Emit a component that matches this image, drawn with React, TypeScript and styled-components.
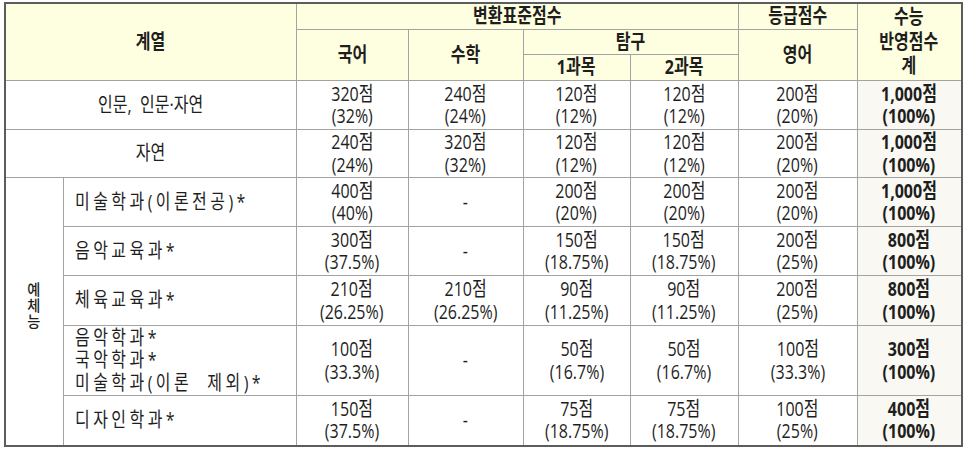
import React from "react";
import styled, { createGlobalStyle } from "styled-components";

const GlobalStyle = createGlobalStyle`
  html, body {
    margin: 0;
    background: #ffffff;
  }
  body {
    font-family: "Open Sans", "Noto Sans CJK KR", sans-serif;
    color: #1e1e1e;
  }
`;

const HEADER_BG = "#fefee0";
const TOTAL_BG = "#f9f8f3";
const LINE = "#a3a3a3";

const Table = styled.table`
  border-collapse: collapse;
  table-layout: fixed;
  width: 957px;
  margin: 2px 0 0 4px;
  border: 2px solid #5c5c5c;
  font-size: 20px;
`;

const Row = styled.tr<{ $h: number }>`
  height: ${({ $h }) => $h}px;
`;

const HeadCell = styled.th`
  background: ${HEADER_BG};
  border: 1px solid ${LINE};
  padding: 0;
  font-weight: 700;
  line-height: 24.5px;
  text-align: center;
  vertical-align: middle;
`;

const Cell = styled.td<{ $total?: boolean }>`
  background: ${({ $total }) => ($total ? TOTAL_BG : "#ffffff")};
  border: 1px solid ${LINE};
  padding: 0;
  font-weight: ${({ $total }) => ($total ? 700 : 400)};
  line-height: 22.5px;
  text-align: center;
  vertical-align: middle;
`;

const NameCell = styled.td`
  border: 1px solid ${LINE};
  padding: 0 0 0 11px;
  line-height: 22.5px;
  text-align: left;
  vertical-align: middle;
  letter-spacing: 4.3px;
`;

const GroupCell = styled.td`
  border: 1px solid ${LINE};
  padding: 0 0 8px;
  text-align: center;
  vertical-align: middle;
`;

const GroupLabel = styled.span`
  display: inline-block;
  font-size: 15px;
  font-weight: 500;
  line-height: 16px;
  color: #1e1e1e;
  transform: scaleX(0.95);
`;

const Squeeze = styled.span<{ $left?: boolean }>`
  display: inline-block;
  white-space: nowrap;
  transform: scaleX(0.8);
  transform-origin: ${({ $left }) => ($left ? "left center" : "center")};
`;

const widths = [58, 233, 112, 115, 107, 108, 119, 105];

type Score = [string, string] | null;

interface Line {
  name: string[];
  cols: Score[];
  total: [string, string];
  h: number;
}

const general: Line[] = [
  {
    name: ["인문,\u00a0 인문·자연"],
    cols: [["320점", "(32%)"], ["240점", "(24%)"], ["120점", "(12%)"], ["120점", "(12%)"], ["200점", "(20%)"]],
    total: ["1,000점", "(100%)"],
    h: 49,
  },
  {
    name: ["자연"],
    cols: [["240점", "(24%)"], ["320점", "(32%)"], ["120점", "(12%)"], ["120점", "(12%)"], ["200점", "(20%)"]],
    total: ["1,000점", "(100%)"],
    h: 48,
  },
];

const arts: Line[] = [
  {
    name: ["미술학과(이론전공)*"],
    cols: [["400점", "(40%)"], null, ["200점", "(20%)"], ["200점", "(20%)"], ["200점", "(20%)"]],
    total: ["1,000점", "(100%)"],
    h: 49,
  },
  {
    name: ["음악교육과*"],
    cols: [["300점", "(37.5%)"], null, ["150점", "(18.75%)"], ["150점", "(18.75%)"], ["200점", "(25%)"]],
    total: ["800점", "(100%)"],
    h: 49,
  },
  {
    name: ["체육교육과*"],
    cols: [["210점", "(26.25%)"], ["210점", "(26.25%)"], ["90점", "(11.25%)"], ["90점", "(11.25%)"], ["200점", "(25%)"]],
    total: ["800점", "(100%)"],
    h: 50,
  },
  {
    name: ["음악학과*", "국악학과*", "미술학과(이론\u00a0 제외)*"],
    cols: [["100점", "(33.3%)"], null, ["50점", "(16.7%)"], ["50점", "(16.7%)"], ["100점", "(33.3%)"]],
    total: ["300점", "(100%)"],
    h: 70,
  },
  {
    name: ["디자인학과*"],
    cols: [["150점", "(37.5%)"], null, ["75점", "(18.75%)"], ["75점", "(18.75%)"], ["100점", "(25%)"]],
    total: ["400점", "(100%)"],
    h: 50,
  },
];

const Breaks = ({ items }: { items: string[] }) => (
  <>
    {items.map((t, i) => (
      <React.Fragment key={i}>
        {i > 0 && <br />}
        {t}
      </React.Fragment>
    ))}
  </>
);

const Lines = ({ items, left }: { items: string[]; left?: boolean }) => (
  <Squeeze $left={left}>
    <Breaks items={items} />
  </Squeeze>
);

const ScoreCells = ({ line }: { line: Line }) => (
  <>
    {line.cols.map((c, i) => (
      <Cell key={i}>{c ? <Lines items={c} /> : <Squeeze>-</Squeeze>}</Cell>
    ))}
    <Cell $total>
      <Lines items={line.total} />
    </Cell>
  </>
);

export default function App() {
  return (
    <>
      <GlobalStyle />
      <Table>
        <colgroup>
          {widths.map((w, i) => (
            <col key={i} style={{ width: w }} />
          ))}
        </colgroup>
        <thead>
          <Row $h={26}>
            <HeadCell rowSpan={3} colSpan={2}>
              <Squeeze>계열</Squeeze>
            </HeadCell>
            <HeadCell colSpan={4}>
              <Squeeze>변환표준점수</Squeeze>
            </HeadCell>
            <HeadCell>
              <Squeeze>등급점수</Squeeze>
            </HeadCell>
            <HeadCell rowSpan={3}>
              <Lines items={["수능", "반영점수", "계"]} />
            </HeadCell>
          </Row>
          <Row $h={24}>
            <HeadCell rowSpan={2}>
              <Squeeze>국어</Squeeze>
            </HeadCell>
            <HeadCell rowSpan={2}>
              <Squeeze>수학</Squeeze>
            </HeadCell>
            <HeadCell colSpan={2}>
              <Squeeze>탐구</Squeeze>
            </HeadCell>
            <HeadCell rowSpan={2}>
              <Squeeze>영어</Squeeze>
            </HeadCell>
          </Row>
          <Row $h={26}>
            <HeadCell>
              <Squeeze>1과목</Squeeze>
            </HeadCell>
            <HeadCell>
              <Squeeze>2과목</Squeeze>
            </HeadCell>
          </Row>
        </thead>
        <tbody>
          {general.map((line) => (
            <Row $h={line.h} key={line.name[0]}>
              <Cell colSpan={2}>
                <Lines items={line.name} />
              </Cell>
              <ScoreCells line={line} />
            </Row>
          ))}
          {arts.map((line, i) => (
            <Row $h={line.h} key={line.name[0]}>
              {i === 0 && (
                <GroupCell rowSpan={arts.length}>
                  <GroupLabel>
                    <Breaks items={["예", "체", "능"]} />
                  </GroupLabel>
                </GroupCell>
              )}
              <NameCell>
                <Lines items={line.name} left />
              </NameCell>
              <ScoreCells line={line} />
            </Row>
          ))}
        </tbody>
      </Table>
    </>
  );
}
